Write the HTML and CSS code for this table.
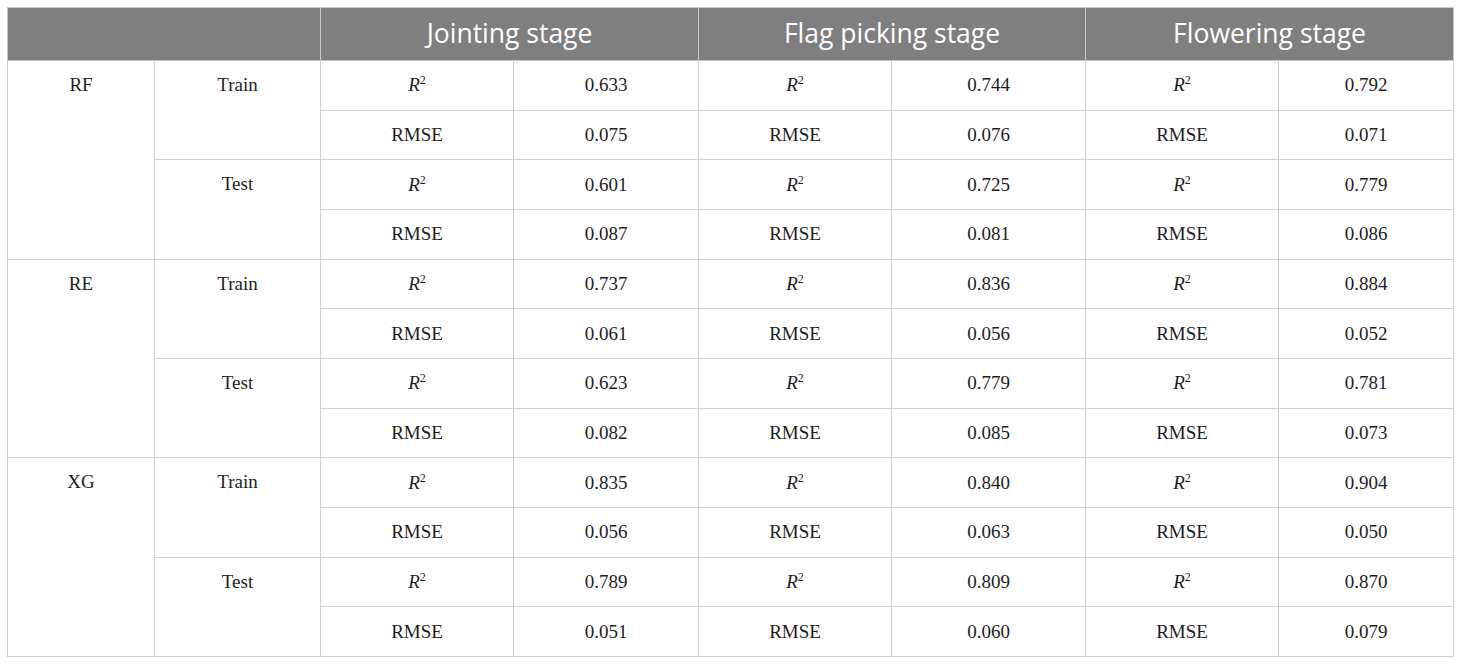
FILE: index.html
```html
<!DOCTYPE html>
<html>
<head>
<meta charset="utf-8">
<link rel="stylesheet" href="styles.css">
</head>
<body>
<div class="wrap">
<table class="data">
  <colgroup>
    <col class="c1"><col class="c2"><col class="c3"><col class="c4"><col class="c5"><col class="c6"><col class="c7"><col class="c8">
  </colgroup>
  <thead>
    <tr>
      <th colspan="2"></th>
      <th colspan="2">Jointing stage</th>
      <th colspan="2">Flag picking stage</th>
      <th colspan="2">Flowering stage</th>
    </tr>
  </thead>
  <tbody>
    <tr><td rowspan="4" class="top">RF</td><td rowspan="2" class="top">Train</td><td><i>R</i><sup>2</sup></td><td>0.633</td><td><i>R</i><sup>2</sup></td><td>0.744</td><td><i>R</i><sup>2</sup></td><td>0.792</td></tr>
    <tr><td>RMSE</td><td>0.075</td><td>RMSE</td><td>0.076</td><td>RMSE</td><td>0.071</td></tr>
    <tr><td rowspan="2" class="top">Test</td><td><i>R</i><sup>2</sup></td><td>0.601</td><td><i>R</i><sup>2</sup></td><td>0.725</td><td><i>R</i><sup>2</sup></td><td>0.779</td></tr>
    <tr><td>RMSE</td><td>0.087</td><td>RMSE</td><td>0.081</td><td>RMSE</td><td>0.086</td></tr>
    <tr><td rowspan="4" class="top">RE</td><td rowspan="2" class="top">Train</td><td><i>R</i><sup>2</sup></td><td>0.737</td><td><i>R</i><sup>2</sup></td><td>0.836</td><td><i>R</i><sup>2</sup></td><td>0.884</td></tr>
    <tr><td>RMSE</td><td>0.061</td><td>RMSE</td><td>0.056</td><td>RMSE</td><td>0.052</td></tr>
    <tr><td rowspan="2" class="top">Test</td><td><i>R</i><sup>2</sup></td><td>0.623</td><td><i>R</i><sup>2</sup></td><td>0.779</td><td><i>R</i><sup>2</sup></td><td>0.781</td></tr>
    <tr><td>RMSE</td><td>0.082</td><td>RMSE</td><td>0.085</td><td>RMSE</td><td>0.073</td></tr>
    <tr><td rowspan="4" class="top">XG</td><td rowspan="2" class="top">Train</td><td><i>R</i><sup>2</sup></td><td>0.835</td><td><i>R</i><sup>2</sup></td><td>0.840</td><td><i>R</i><sup>2</sup></td><td>0.904</td></tr>
    <tr><td>RMSE</td><td>0.056</td><td>RMSE</td><td>0.063</td><td>RMSE</td><td>0.050</td></tr>
    <tr><td rowspan="2" class="top">Test</td><td><i>R</i><sup>2</sup></td><td>0.789</td><td><i>R</i><sup>2</sup></td><td>0.809</td><td><i>R</i><sup>2</sup></td><td>0.870</td></tr>
    <tr><td>RMSE</td><td>0.051</td><td>RMSE</td><td>0.060</td><td>RMSE</td><td>0.079</td></tr>
  </tbody>
</table>
</div>
</body>
</html>
```
FILE: styles.css
```css
html, body {
  margin: 0;
  padding: 0;
  background: #ffffff;
}
.wrap {
  padding: 7px 7px 0 7px;
}
.data {
  width: 1446px;
  border-collapse: collapse;
  table-layout: fixed;
  font-family: "Liberation Serif", "Times New Roman", serif;
  font-size: 19px;
  color: #1e1e1e;
}
.c1 { width: 147px; }
.c2 { width: 166px; }
.c3 { width: 193px; }
.c4 { width: 185px; }
.c5 { width: 193px; }
.c6 { width: 194px; }
.c7 { width: 193px; }
.c8 { width: 175px; }
.data th {
  background: #7f7f7f;
  color: #ffffff;
  font-family: "Open Sans", "Liberation Sans", sans-serif;
  font-weight: 400;
  font-size: 26.5px;
  height: 50px;
  padding: 0 0 2px 0;
  border: 1px solid #c8c8c8;
  text-align: center;
  vertical-align: middle;
  line-height: 30px;
}
.data td {
  height: 48.66px;
  padding: 0;
  border: 1px solid #cfcfcf;
  text-align: center;
  vertical-align: middle;
  line-height: 22px;
}
.data td.top {
  vertical-align: top;
  padding-top: 13px;
}
.data i {
  font-style: italic;
}
.data sup {
  font-size: 12px;
  line-height: 0;
  vertical-align: 7px;
}
```
